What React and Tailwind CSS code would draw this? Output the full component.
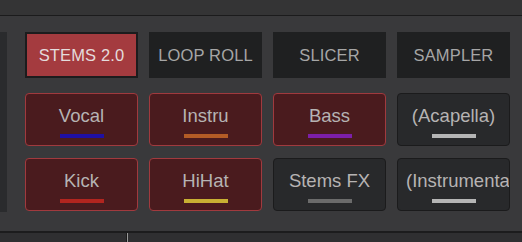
import React from 'react';

const tabs = [
  { label: 'STEMS 2.0', active: true },
  { label: 'LOOP ROLL' },
  { label: 'SLICER' },
  { label: 'SAMPLER' },
];

const pads = [
  { label: 'Vocal', bar: 'bg-[#1f10a3]', on: true },
  { label: 'Instru', bar: 'bg-[#b35c26]', on: true },
  { label: 'Bass', bar: 'bg-[#7c1fa9]', on: true },
  { label: '(Acapella)', bar: 'bg-[#b5b5b5]' },
  { label: 'Kick', bar: 'bg-[#b2251f]', on: true },
  { label: 'HiHat', bar: 'bg-[#c8b033]', on: true },
  { label: 'Stems FX', bar: 'bg-[#6b6b6b]' },
  { label: '(Instrumental)', bar: 'bg-[#b5b5b5]' },
];

export default function App() {
  return (
    <div className="w-[522px] h-[242px] overflow-hidden bg-[#39393b] flex flex-col font-['Liberation_Sans',Arial,sans-serif]">
      {/* top strip */}
      <div className="h-[16px] bg-[#343435] border-b border-[#1b1b1c] shrink-0"></div>

      <div className="flex h-[215px] pt-[16px] shrink-0">
        {/* left edge panel */}
        <div className="w-[7px] h-[180px] bg-[#2a2b2d] shrink-0"></div>

        <div className="ml-[18px] grid grid-cols-[repeat(4,113px)] gap-x-[11px] content-start">
          {tabs.map((t) => (
            <div
              key={t.label}
              className={
                t.active
                  ? 'h-[46px] flex items-center justify-center bg-[#a43b3f] border-2 border-[#1c1c1d] text-[#e4dcdc] text-[16.5px] tracking-[0.15px]'
                  : 'h-[46px] flex items-center justify-center bg-[#1f2021] text-[#a6a6a6] text-[16.5px] tracking-[0.15px]'
              }
            >
              {t.label}
            </div>
          ))}

          <div className="col-span-4 grid grid-cols-[repeat(4,113px)] gap-x-[11px] gap-y-[12px] mt-[15px]">
            {pads.map((p) => (
              <div
                key={p.label}
                className={
                  p.on
                    ? 'h-[53px] rounded-[4px] border-[1.5px] border-[#a13a3e] bg-[#4a1b1e] flex flex-col items-center pt-[11px]'
                    : 'h-[53px] rounded-[4px] border-[1.5px] border-[#1b1b1c] bg-[#28292b] flex flex-col items-center pt-[11px]'
                }
              >
                <div className="w-full px-[8px] overflow-hidden whitespace-nowrap text-center text-[18.5px] leading-[22px] text-[#b6b3b3]">
                  {p.label}
                </div>
                <div className={`mt-[7px] w-[44px] h-[4px] shrink-0 ${p.bar}`}></div>
              </div>
            ))}
          </div>
        </div>
      </div>

      {/* bottom strip */}
      <div className="flex-1 border-t-2 border-[#1c1c1d] bg-[#2f2f31] flex">
        <div className="ml-[126px] w-[1px] bg-[#1a1a1a]"></div>
        <div className="w-[1px] bg-[#9a9a9a]"></div>
      </div>
    </div>
  );
}
